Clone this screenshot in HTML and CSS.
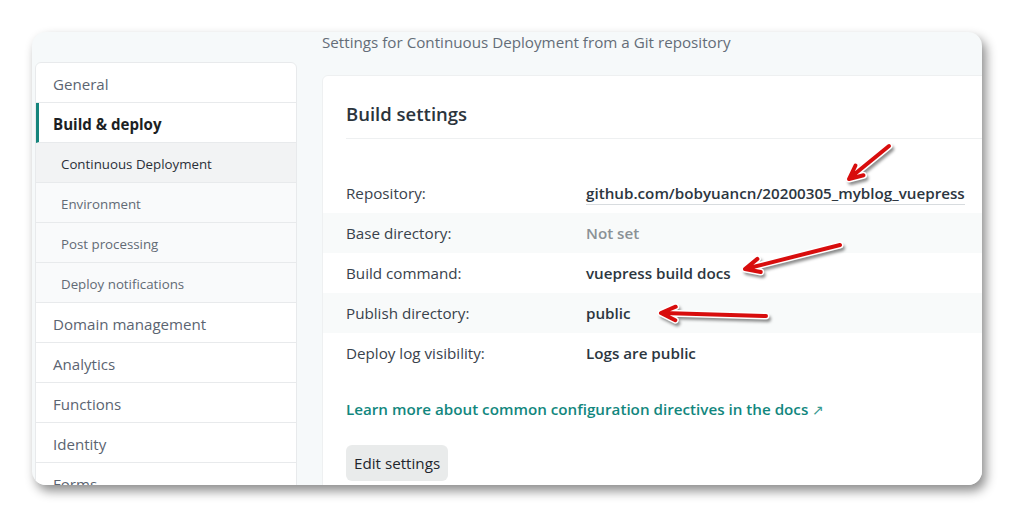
FILE: index.html
```html
<!DOCTYPE html>
<html lang="en">
<head>
<meta charset="utf-8">
<title>Build settings</title>
<link rel="stylesheet" href="styles.css">
</head>
<body>
<div class="window">
  <aside class="sidebar">
    <div class="nav-item">General</div>
    <div class="nav-item active">Build &amp; deploy</div>
    <div class="nav-sub current">Continuous Deployment</div>
    <div class="nav-sub">Environment</div>
    <div class="nav-sub">Post processing</div>
    <div class="nav-sub">Deploy notifications</div>
    <div class="nav-item">Domain management</div>
    <div class="nav-item">Analytics</div>
    <div class="nav-item">Functions</div>
    <div class="nav-item">Identity</div>
    <div class="nav-item">Forms</div>
  </aside>
  <main class="main">
    <div class="subtitle">Settings for Continuous Deployment from a Git repository</div>
    <section class="card">
      <h2 class="card-title">Build settings</h2>
      <dl class="rows">
        <div class="row"><dt>Repository:</dt><dd><span class="repo">github.com/bobyuancn/20200305_myblog_vuepress</span></dd></div>
        <div class="row striped"><dt>Base directory:</dt><dd class="muted">Not set</dd></div>
        <div class="row"><dt>Build command:</dt><dd>vuepress build docs</dd></div>
        <div class="row striped"><dt>Publish directory:</dt><dd>public</dd></div>
        <div class="row"><dt>Deploy log visibility:</dt><dd>Logs are public</dd></div>
      </dl>
      <a class="docs-link" href="#">Learn more about common configuration directives in the docs <span class="ext">&#8599;</span></a>
      <button class="btn">Edit settings</button>
    </section>
  </main>
</div>
<svg class="annotations" width="1014" height="517" viewBox="0 0 1014 517">
  <defs>
    <filter id="sh" x="-20%" y="-20%" width="140%" height="140%">
      <feGaussianBlur stdDeviation="1.6"/>
    </filter>
  </defs>
  <g class="shadow" transform="translate(2,3)" filter="url(#sh)">
    <path d="M889 146 L851 177 M863.5 175.3 L849 179 L855.5 165.5"/>
    <path d="M840 245 L747 268.5 M760.7 272 L745 269 L757.4 258.9"/>
    <path d="M766 316 L663 313 M675.3 320.2 L661 313 L675.7 306.7"/>
  </g>
  <g class="outline">
    <path d="M889 146 L851 177 M863.5 175.3 L849 179 L855.5 165.5"/>
    <path d="M840 245 L747 268.5 M760.7 272 L745 269 L757.4 258.9"/>
    <path d="M766 316 L663 313 M675.3 320.2 L661 313 L675.7 306.7"/>
  </g>
  <g class="arrow">
    <path d="M889 146 L851 177 M863.5 175.3 L849 179 L855.5 165.5"/>
    <path d="M840 245 L747 268.5 M760.7 272 L745 269 L757.4 258.9"/>
    <path d="M766 316 L663 313 M675.3 320.2 L661 313 L675.7 306.7"/>
  </g>
</svg>
</body>
</html>
```

FILE: styles.css
```css
* { box-sizing: border-box; }
html, body {
  margin: 0;
  padding: 0;
  background: #ffffff;
  width: 1014px;
  height: 517px;
  overflow: hidden;
  font-family: "Open Sans", "Noto Sans", "Liberation Sans", sans-serif;
}
body { position: relative; }

.window {
  margin: 32px 0 0 32px;
  width: 950px;
  height: 453px;
  border-radius: 14px;
  overflow: hidden;
  background: #f6f9fa;
  box-shadow: 4px 6px 11px rgba(0,0,0,0.45);
  display: flex;
  align-items: flex-start;
}

.sidebar {
  margin: 30px 0 0 3px;
  width: 262px;
  flex: none;
  background: #ffffff;
  border: 1px solid #e8eaec;
  border-radius: 6px 6px 0 0;
}
.nav-item, .nav-sub {
  height: 40px;
  display: flex;
  align-items: center;
  border-bottom: 1px solid #e8eaec;
  white-space: nowrap;
  padding-top: 2px;
}
.nav-item {
  padding-left: 17px;
  font-size: 15.1px;
  color: #5b6471;
}
.nav-item.active {
  font-weight: 700;
  color: #1c1f24;
  border-left: 3px solid #15857c;
  padding-left: 14px;
}
.nav-sub {
  padding-left: 25px;
  font-size: 13.3px;
  color: #626a75;
  background: #f9fafb;
}
.nav-sub.current {
  background: #f2f3f4;
  color: #2a2f38;
}

.main {
  margin-left: 25px;
  flex: 1;
  min-width: 0;
}
.subtitle {
  height: 20px;
  line-height: 20px;
  font-size: 15.2px;
  color: #646d78;
  white-space: nowrap;
}
.card {
  margin-top: 23px;
  width: calc(100% + 20px);
  background: #ffffff;
  border: 1px solid #eef0f1;
  border-radius: 6px;
  height: 420px;
}
.card-title {
  margin: 0 0 0 23px;
  padding: 26px 0 12px;
  font-size: 18.5px;
  line-height: 24px;
  font-weight: 600;
  color: #2b343c;
  border-bottom: 1px solid #eef0f1;
}
.rows {
  margin: 34px 0 0;
  padding: 0;
}
.row {
  display: grid;
  grid-template-columns: 240px 1fr;
  align-items: center;
  height: 40px;
  padding-left: 23px;
  font-size: 15.2px;
}
.row.striped { background: #f8fafa; }
.row dt {
  color: #39424c;
}
.row dd {
  margin: 0;
  font-weight: 600;
  color: #2c3640;
  white-space: nowrap;
}
.row dd.muted { color: #8a9196; }
.repo {
  border-bottom: 1px solid #d8dcdf;
  padding-bottom: 1px;
}
.docs-link {
  display: block;
  margin: 26px 0 0 23px;
  line-height: 20px;
  font-size: 15.2px;
  font-weight: 600;
  color: #12877e;
  text-decoration: none;
  white-space: nowrap;
}
.ext {
  font-weight: 400;
  font-size: 13.5px;
  color: #3a9b93;
}
.btn {
  display: block;
  margin: 25px 0 0 23px;
  height: 36px;
  padding: 0 8px;
  border: none;
  border-radius: 6px;
  background: #e9ebeb;
  font-family: inherit;
  font-size: 15.2px;
  color: #1f262d;
}

.annotations {
  position: absolute;
  left: 0;
  top: 0;
  pointer-events: none;
}
.annotations path {
  fill: none;
  stroke-linecap: round;
  stroke-linejoin: round;
}
.annotations .shadow path { stroke: rgba(0,0,0,0.45); stroke-width: 6; }
.annotations .outline path { stroke: #ffffff; stroke-width: 7; }
.annotations .arrow path { stroke: #d80d0d; stroke-width: 4; }
```
